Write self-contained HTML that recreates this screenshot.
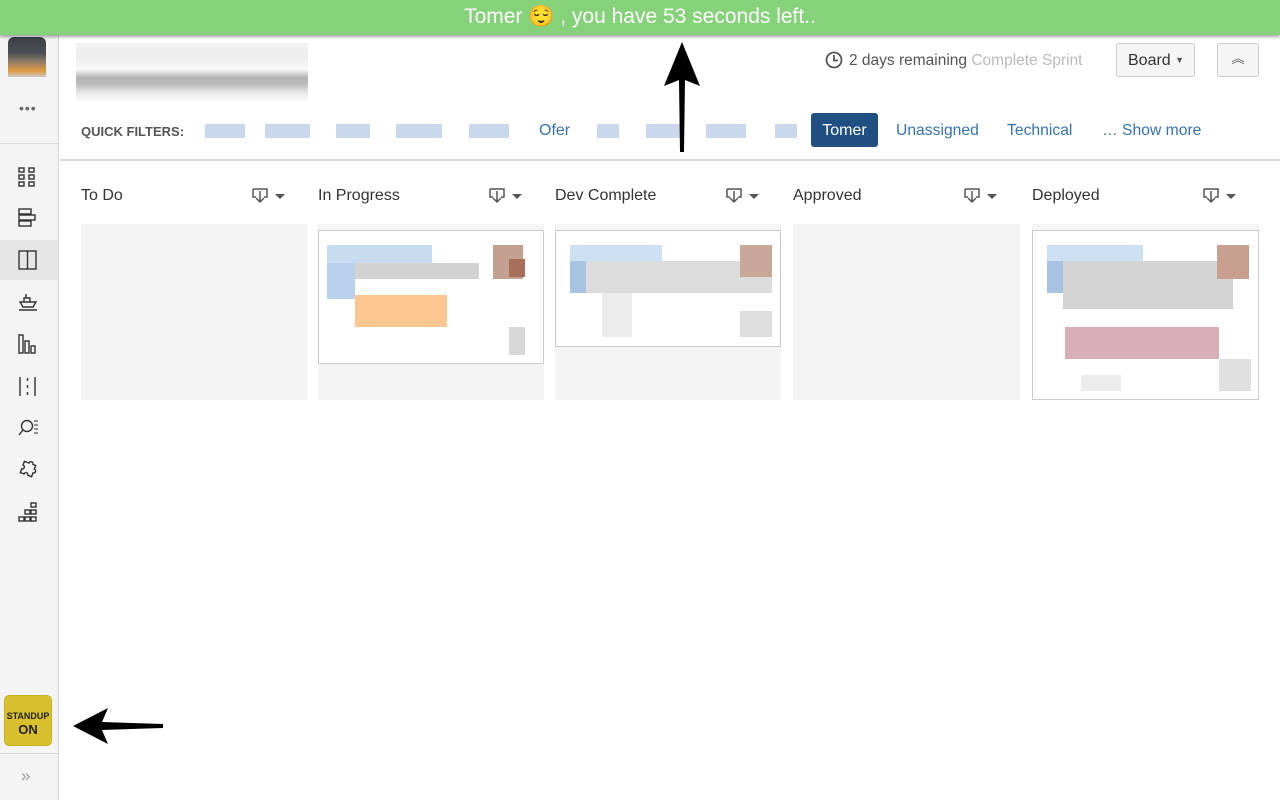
<!DOCTYPE html>
<html><head><meta charset="utf-8"><style>
*{margin:0;padding:0;box-sizing:border-box}
body{width:1280px;height:800px;position:relative;overflow:hidden;background:#fff;font-family:"Liberation Sans",Arial,sans-serif;color:#333}
.a{position:absolute}
.top{left:0;top:0;width:1280px;height:35px;background:#86d27a;color:#fff;font-size:21px;text-align:center;line-height:34px;box-shadow:0 2px 3px rgba(0,0,0,.35);z-index:5}
.side{left:0;top:35px;width:59px;height:765px;background:#f4f4f4;border-right:1px solid #d9d9d9}
.col{font-size:16px;color:#333}
.body{background:#f4f4f4;height:176px;top:224px;width:226px}
.card{background:#fff;border:1px solid #ccc}
.b{position:absolute}
.qf{color:#205081;font-size:16px}
.blur{position:absolute;height:14px;background:#c9d8ea;top:124px}
</style></head><body>
<div class="a top">Tomer 😌 , you have 53 seconds left..</div>

<div class="a side">
  <div class="a" style="left:8px;top:2px;width:38px;height:40px;background:linear-gradient(180deg,#3a3f46 0,#4a4f56 40%,#8a7a66 60%,#e09a40 85%,#c9c9c9 100%);border-radius:6px 6px 0 0"></div>
  <div class="a" style="left:19px;top:65px;font-size:14px;color:#666;letter-spacing:1px">•••</div>
  <div class="a" style="left:0;top:108px;width:58px;border-top:1px solid #d9d9d9"></div>
  <div class="a" style="left:0;top:205px;width:58px;height:40px;background:#e6e6e6"></div>
  <svg class="a" style="left:0;top:120px" width="58" height="380" fill="none" stroke="#333" stroke-width="1.4">
    <g transform="translate(19,13)"><rect x="0" y="0" width="5" height="4"/><rect x="10" y="0" width="5" height="4"/><rect x="0" y="7" width="5" height="4"/><rect x="10" y="7" width="5" height="4"/><rect x="0" y="14" width="5" height="4"/><rect x="10" y="14" width="5" height="4"/></g>
    <g transform="translate(19,54)"><rect x="0" y="0" width="12" height="5"/><rect x="0" y="6" width="16" height="5"/><rect x="0" y="12" width="12" height="5"/></g>
    <g transform="translate(19,96)"><rect x="0" y="0" width="17" height="18"/><line x1="8.5" y1="0" x2="8.5" y2="18"/></g>
    <g transform="translate(19,138)"><path d="M1 9h16l-3 5H4z"/><path d="M5 9V5h6v4M7 5V1"/><line x1="0" y1="17" x2="18" y2="17"/></g>
    <g transform="translate(19,180)"><rect x="0" y="0" width="4" height="18"/><rect x="6" y="6" width="4" height="12"/><rect x="12" y="11" width="4" height="7"/></g>
    <g transform="translate(19,222)"><line x1="1" y1="0" x2="1" y2="19"/><line x1="16" y1="0" x2="16" y2="19"/><path d="M8.5 1v3M8.5 8v3M8.5 15v3"/></g>
    <g transform="translate(19,264)"><circle cx="8" cy="7" r="5.5"/><line x1="4" y1="11" x2="0" y2="16"/><path d="M15 2h4M15 6h4M15 10h4M15 14h4" stroke-width="1.1"/></g>
    <g transform="translate(19,305)"><path d="M5 3h3a2 2 0 1 1 4 0h3v4a2 2 0 1 1 0 4v4h-4a2 2 0 1 0-4 0H3v-4a2 2 0 1 0 0-4V3z" transform="rotate(20 9 9)"/></g>
    <g transform="translate(19,348)"><rect x="12" y="0" width="5" height="4"/><rect x="6" y="7" width="5" height="4"/><rect x="12" y="7" width="5" height="4"/><rect x="0" y="14" width="5" height="4"/><rect x="6" y="14" width="5" height="4"/><rect x="12" y="14" width="5" height="4"/></g>
  </svg>
  <div class="a" style="left:4px;top:660px;width:48px;height:51px;background:#d9c12e;border:1px solid #c9b22a;border-radius:5px;text-align:center;color:#222;font-weight:bold">
    <div style="font-size:9px;margin-top:15px">STANDUP</div><div style="font-size:13px;margin-top:1px">ON</div></div>
  <div class="a" style="left:0;top:718px;width:58px;border-top:1px solid #d9d9d9"></div>
  <div class="a" style="left:21px;top:731px;color:#999;font-size:17px">»</div>
</div>

<div class="a" style="left:76px;top:43px;width:232px;height:58px;background:linear-gradient(180deg,#f2eef2 0,#ebebeb 25%,#f8f8f8 45%,#a9a9a9 60%,#b6b6b6 72%,#e6e6e6 85%,#fafafa 100%);opacity:.9"></div>

<svg class="a" style="left:825px;top:51px" width="18" height="18" fill="none" stroke="#555" stroke-width="1.8"><circle cx="9" cy="9" r="7.5"/><path d="M9 4v5.5h4"/></svg>
<div class="a" style="left:849px;top:52px;font-size:15.5px;color:#555">2 days remaining <span style="color:#bbb">Complete Sprint</span></div>
<div class="a" style="left:1116px;top:43px;width:79px;height:34px;border:1px solid #ccc;border-radius:3px;background:#f5f5f5;font-size:16px;line-height:32px;padding-left:11px;color:#333">Board <span style="font-size:9px;color:#555;vertical-align:2px">▼</span></div>
<div class="a" style="left:1217px;top:43px;width:42px;height:34px;border:1px solid #ccc;border-radius:3px;background:#f5f5f5;text-align:center;line-height:30px;color:#555;font-size:13px">︽</div>

<div class="a" style="left:81px;top:124px;font-size:13px;font-weight:bold;color:#555">QUICK FILTERS:</div>
<div class="blur" style="left:205px;width:40px"></div>
<div class="blur" style="left:265px;width:45px"></div>
<div class="blur" style="left:336px;width:34px"></div>
<div class="blur" style="left:396px;width:46px"></div>
<div class="blur" style="left:469px;width:40px"></div>
<div class="a qf" style="left:539px;top:122px;color:#3572b0">Ofer</div>
<div class="blur" style="left:597px;width:22px"></div>
<div class="blur" style="left:646px;width:36px"></div>
<div class="blur" style="left:706px;width:40px"></div>
<div class="blur" style="left:775px;width:22px"></div>
<div class="a" style="left:811px;top:113px;width:67px;height:34px;background:#205081;border-radius:3px;color:#fff;font-size:16px;text-align:center;line-height:36px">Tomer</div>
<div class="a qf" style="left:896px;top:122px;color:#3572b0;font-size:15.7px">Unassigned</div>
<div class="a qf" style="left:1007px;top:122px;color:#3572b0;font-size:15.7px">Technical</div>
<div class="a qf" style="left:1102px;top:122px;color:#3572b0;font-size:15.7px">… Show more</div>
<div class="a" style="left:60px;top:159px;width:1220px;border-top:2px solid #dcdcdc"></div>

<div class="a col" style="left:81px;top:187px">To Do</div>
<div class="a col" style="left:318px;top:187px">In Progress</div>
<div class="a col" style="left:555px;top:187px">Dev Complete</div>
<div class="a col" style="left:793px;top:187px">Approved</div>
<div class="a col" style="left:1032px;top:187px">Deployed</div>
<svg class="a" style="left:0;top:186px" width="1280" height="20" fill="none" stroke="#555" stroke-width="1.5">
<g id="f"><path d="M253 3h14v8h-3M256 11h-3V3M260 5v11M256 12l4 4 4-4"/><path d="M275 8h10l-5 5z" fill="#555" stroke="none"/></g>
<use href="#f" x="237"/><use href="#f" x="474"/><use href="#f" x="712"/><use href="#f" x="951"/>
</svg>

<div class="a body" style="left:81px"></div>
<div class="a body" style="left:318px"></div>
<div class="a body" style="left:555px"></div>
<div class="a body" style="left:793px;width:227px"></div>
<div class="a body" style="left:1032px;width:227px"></div>

<div class="a card" style="left:318px;top:230px;width:226px;height:134px">
 <div class="b" style="left:8px;top:14px;width:105px;height:18px;background:#c8dcf0"></div>
 <div class="b" style="left:8px;top:32px;width:28px;height:36px;background:#b8d0ea"></div>
 <div class="b" style="left:36px;top:32px;width:124px;height:16px;background:#d2d2d2"></div>
 <div class="b" style="left:174px;top:14px;width:30px;height:34px;background:#c4a090"></div>
 <div class="b" style="left:190px;top:28px;width:16px;height:18px;background:#a8705a"></div>
 <div class="b" style="left:36px;top:64px;width:92px;height:32px;background:#fcc690"></div>
 <div class="b" style="left:190px;top:96px;width:16px;height:28px;background:#d8d8d8"></div>
</div>
<div class="a card" style="left:555px;top:230px;width:226px;height:117px">
 <div class="b" style="left:14px;top:14px;width:92px;height:16px;background:#cde0f2"></div>
 <div class="b" style="left:14px;top:30px;width:16px;height:32px;background:#a8c4e2"></div>
 <div class="b" style="left:30px;top:30px;width:186px;height:32px;background:#dcdcdc"></div>
 <div class="b" style="left:184px;top:14px;width:32px;height:32px;background:#c8a898"></div>
 <div class="b" style="left:46px;top:62px;width:30px;height:44px;background:#ececec"></div>
 <div class="b" style="left:184px;top:80px;width:32px;height:26px;background:#dedede"></div>
</div>
<div class="a card" style="left:1032px;top:230px;width:227px;height:170px">
 <div class="b" style="left:14px;top:14px;width:96px;height:16px;background:#cde0f2"></div>
 <div class="b" style="left:14px;top:30px;width:16px;height:32px;background:#a8c4e2"></div>
 <div class="b" style="left:30px;top:30px;width:170px;height:48px;background:#d4d4d4"></div>
 <div class="b" style="left:184px;top:14px;width:32px;height:34px;background:#c8a090"></div>
 <div class="b" style="left:32px;top:96px;width:154px;height:32px;background:#d8aeb8"></div>
 <div class="b" style="left:186px;top:128px;width:32px;height:32px;background:#e0e0e0"></div>
 <div class="b" style="left:48px;top:144px;width:40px;height:16px;background:#ececec"></div>
</div>

<svg class="a" style="left:0;top:0;z-index:6" width="1280" height="800">
<path d="M682 42 L664 86 L679 80 L680 152 L684 152 L685 80 L700 86 Z" fill="#000"/>
<path d="M73 726 L108 708 L102 722 L163 724 L163 728 L102 730 L108 744 Z" fill="#000"/>
</svg>
</body></html>
